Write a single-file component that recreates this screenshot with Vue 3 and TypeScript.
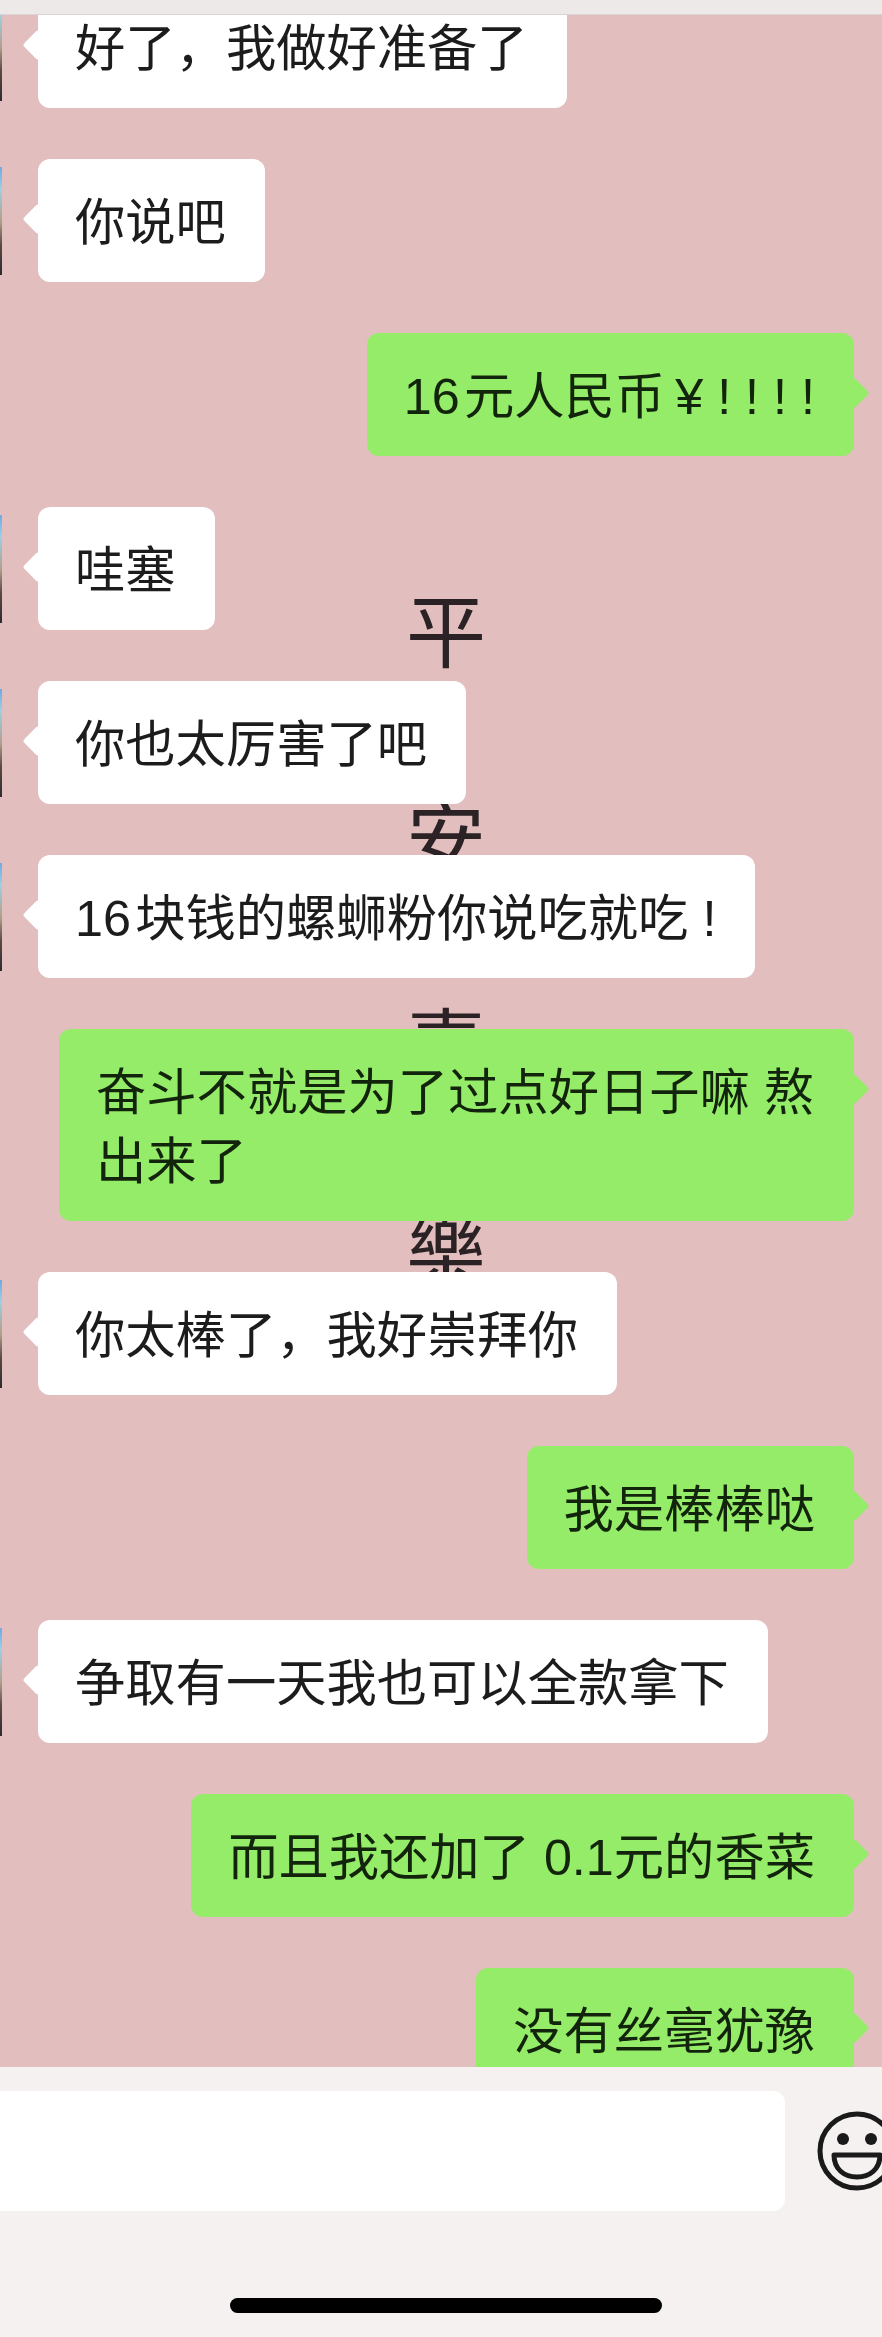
<template>
  <div class="phone">
    <div class="top-bar"></div>
    <div class="chat">
      <div class="wallpaper">
        <span v-for="c in wallChars" :key="c" class="wall-char">{{ c }}</span>
      </div>
      <div class="messages">
        <div v-for="(m, i) in messages" :key="i" class="row" :class="m.me ? 'me' : 'them'">
          <div v-if="!m.me" class="avatar"></div>
          <div class="bubble">{{ m.text }}</div>
        </div>
      </div>
    </div>
    <div class="composer">
      <div class="input-row">
        <div class="input"></div>
        <svg class="smile" viewBox="0 0 80 80" fill="none">
          <circle cx="40" cy="40" r="37" stroke="#1a1a1a" stroke-width="5" />
          <circle cx="26" cy="28" r="6" fill="#1a1a1a" />
          <circle cx="54" cy="28" r="6" fill="#1a1a1a" />
          <path d="M17 44H63C63 58 53 66 40 66C27 66 17 58 17 44Z" stroke="#1a1a1a" stroke-width="5" stroke-linejoin="round" />
        </svg>
      </div>
      <div class="home-bar"></div>
    </div>
  </div>
</template>

<script setup lang="ts">
interface Message {
  text: string;
  me: boolean;
}

const wallChars = ['平', '安', '喜', '樂'];

const messages: Message[] = [
  { text: '好了，我做好准备了', me: false },
  { text: '你说吧', me: false },
  { text: '16\u200a元人民币\u2009¥ ! ! ! !', me: true },
  { text: '哇塞', me: false },
  { text: '你也太厉害了吧', me: false },
  { text: '16\u200a块钱的螺蛳粉你说吃就吃 !', me: false },
  { text: '奋斗不就是为了过点好日子嘛 熬出来了', me: true },
  { text: '你太棒了，我好崇拜你', me: false },
  { text: '我是棒棒哒', me: true },
  { text: '争取有一天我也可以全款拿下', me: false },
  { text: '而且我还加了 0.1元的香菜', me: true },
  { text: '没有丝毫犹豫', me: true },
];
</script>

<style>
html,
body {
  margin: 0;
  background: #f4f1f0;
}
</style>

<style scoped>
.phone {
  display: flex;
  flex-direction: column;
  width: 882px;
  height: 2337px;
  overflow: hidden;
  font-family: "Liberation Sans", "Noto Sans CJK SC", sans-serif;
}

.top-bar {
  flex: none;
  height: 15px;
  background: #ece9e8;
  border-bottom: 1px solid #d9d5d4;
  box-sizing: border-box;
}

.chat {
  position: relative;
  flex: none;
  height: 2052px;
  overflow: hidden;
  background: #e3bebe;
}

.wallpaper {
  position: absolute;
  top: 571px;
  left: 406px;
  display: flex;
  flex-direction: column;
  gap: 127px;
}

.wall-char {
  font-family: "Noto Sans CJK TC", sans-serif;
  font-size: 80px;
  line-height: 80px;
  color: #2a2224;
}

.messages {
  position: relative;
  display: flex;
  flex-direction: column;
  gap: 51px;
  margin-top: -30px;
}

.row {
  position: relative;
  display: flex;
}

.row.them {
  justify-content: flex-start;
  padding-left: 38px;
}

.row.me {
  justify-content: flex-end;
  padding-right: 28px;
}

.avatar {
  position: absolute;
  top: 8px;
  left: 0;
  width: 2px;
  height: 108px;
  background: linear-gradient(#6fa8e6 0%, #9cd0e4 20%, #b0a08c 50%, #5a4a44 72%, #2e2a30 100%);
}

.bubble {
  position: relative;
  box-sizing: border-box;
  max-width: 795px;
  padding: 29px 39px 25px 37px;
  border-radius: 12px;
  font-size: 50.3px;
  line-height: 69px;
  color: #1c1c1c;
  background: #fff;
}

.bubble::before {
  content: "";
  position: absolute;
  top: 49px;
  width: 22px;
  height: 22px;
  border-radius: 3px;
  background: inherit;
  transform: rotate(45deg);
}

.them .bubble::before {
  left: -11px;
}

.me .bubble {
  color: #12240c;
  background: #95ec69;
}

.me .bubble::before {
  right: -11px;
}

.composer {
  flex: none;
  display: flex;
  flex-direction: column;
  height: 270px;
  padding-top: 24px;
  box-sizing: border-box;
  background: #f4f1f0;
}

.input-row {
  display: flex;
  align-items: center;
  gap: 32px;
}

.input {
  flex: none;
  width: 785px;
  height: 120px;
  border-radius: 0 12px 12px 0;
  background: #fff;
}

.smile {
  flex: none;
  width: 80px;
  height: 80px;
}

.home-bar {
  width: 432px;
  height: 15px;
  margin-top: 87px;
  margin-left: 230px;
  border-radius: 8px;
  background: #000;
}
</style>
